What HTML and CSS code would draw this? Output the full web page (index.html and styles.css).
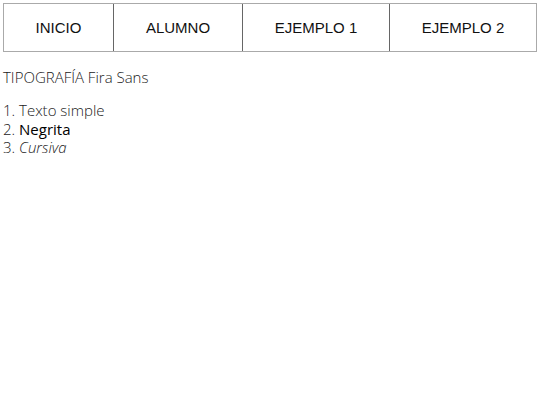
FILE: index.html
```html
<!DOCTYPE html>
<html lang="es">
<head>
<meta charset="utf-8">
<link rel="stylesheet" href="styles.css">
</head>
<body>
<nav class="menu">
  <a class="item w1">INICIO</a>
  <a class="item w2">ALUMNO</a>
  <a class="item w3">EJEMPLO 1</a>
  <a class="item w4">EJEMPLO 2</a>
</nav>
<main class="content">
  <p class="title">TIPOGRAFÍA Fira Sans</p>
  <ol class="list">
    <li>Texto simple</li>
    <li><strong>Negrita</strong></li>
    <li><em>Cursiva</em></li>
  </ol>
</main>
</body>
</html>
```
FILE: styles.css
```css
html, body { margin: 0; padding: 0; background: #fff; }
body { font-family: "Open Sans", "Noto Sans", sans-serif; color: #222; }
.menu {
  display: flex;
  margin: 3px 3px 0 3px;
  border: 1px solid #aaa;
  height: 47px;
}
.item {
  display: flex;
  align-items: center;
  justify-content: center;
  font-family: "Liberation Sans", Arial, sans-serif;
  font-size: 15px;
  color: #111;
  border-left: 1px solid #666;
}
.item.w1 { width: 109px; border-left: none; }
.item.w2 { width: 128px; }
.item.w3 { width: 146px; }
.item.w4 { flex: 1; }
.content { padding: 0 3px; font-weight: 300; font-size: 15px; }
.title { margin: 15px 0 0 0; line-height: 20px; }
.list { margin: 14px 0 0 0; padding: 0; list-style-position: inside; line-height: 18.5px; }
.list strong { font-weight: 500; color: #000; }
.list em { font-style: italic; }
```
